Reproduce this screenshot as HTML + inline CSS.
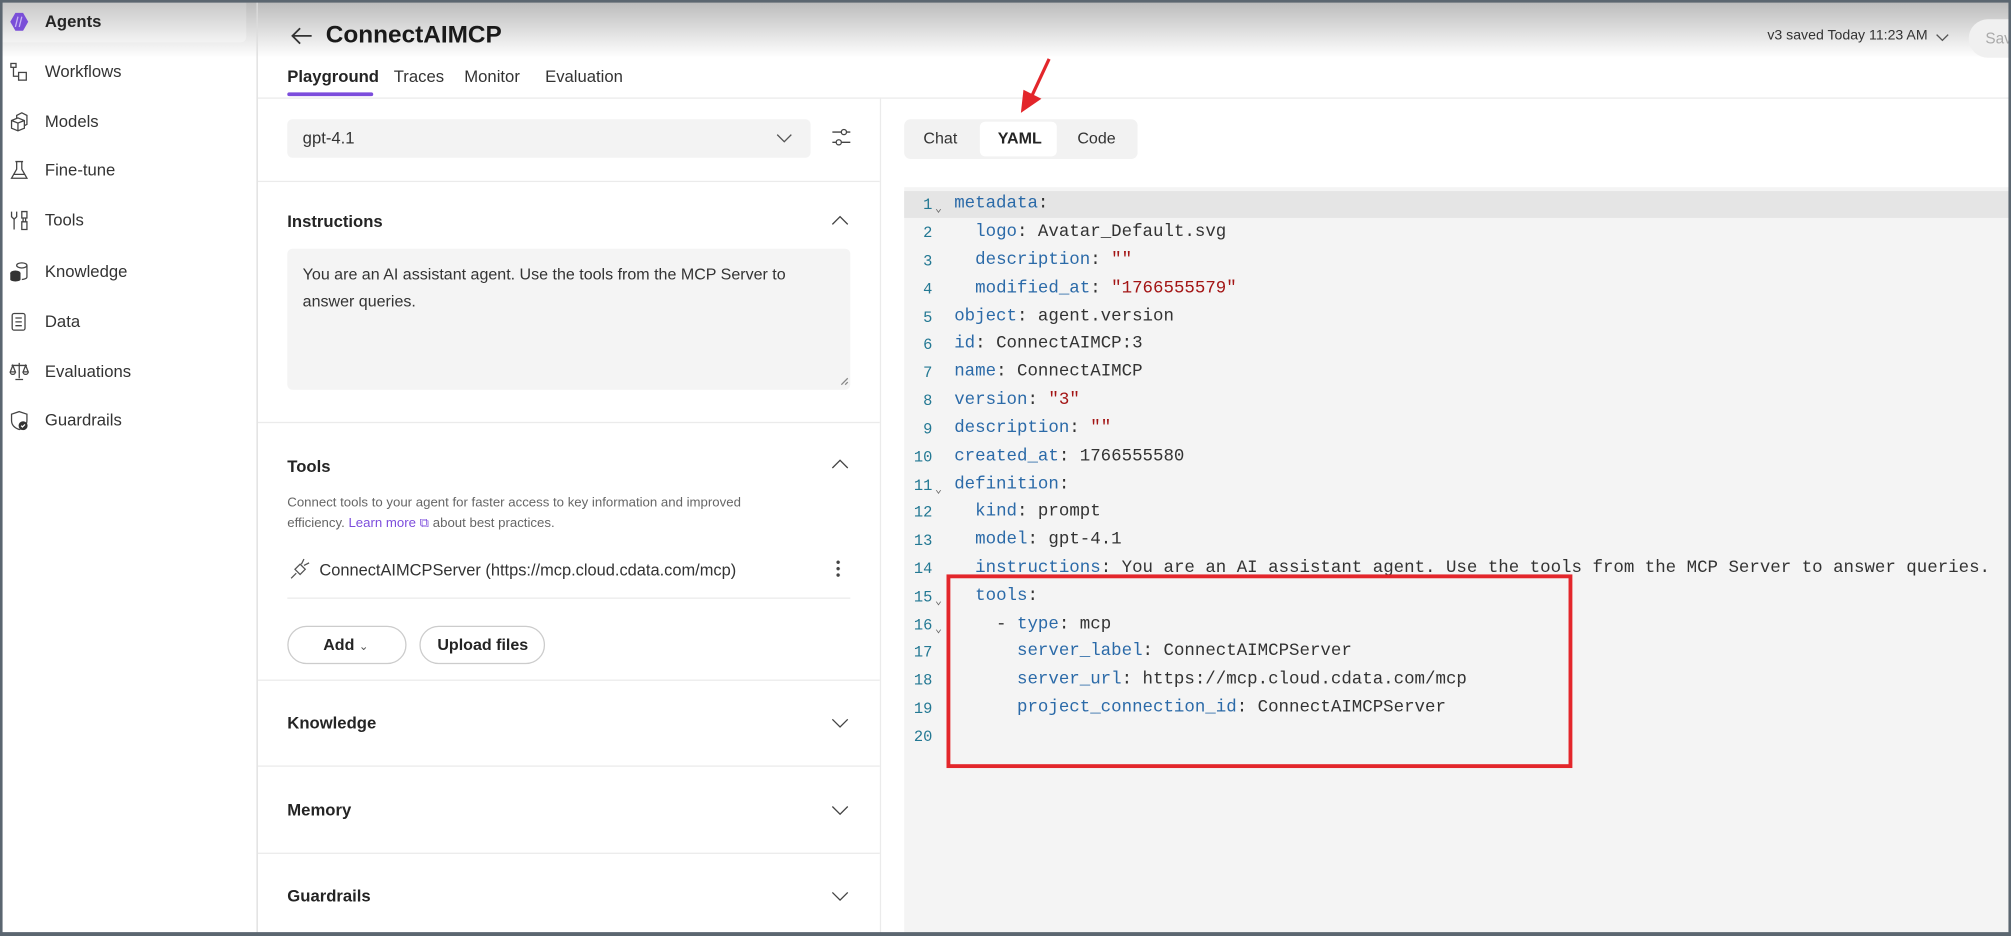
<!DOCTYPE html>
<html><head><meta charset="utf-8"><style>
*{box-sizing:border-box;margin:0;padding:0}
html,body{width:2011px;height:936px;overflow:hidden;background:#5b6670}
#s{position:absolute;left:0;top:0;width:1568px;height:730px;transform:scale(1.28253,1.2822);transform-origin:0 0;background:#fff;font-family:"Liberation Sans",sans-serif;color:#242424;overflow:hidden}
.a{position:absolute}
.frame{border-style:solid;border-color:#5b6670;border-width:2px 2px 3px 2px;position:absolute;left:0;top:0;width:1568px;height:730px;pointer-events:none}
.nav{position:absolute;left:35px;font-size:13px;color:#333}
.ic{position:absolute;left:7px;width:16px;height:16px}
.hr{position:absolute;height:1px;background:#ebebeb}
.sec{position:absolute;left:224px;font-size:13px;font-weight:bold;color:#242424}
.chev{position:absolute;left:648px;width:14px;height:10px}
.code{position:absolute;left:705px;top:146px;width:861px;height:584px;background:#f4f4f4;font-family:"Liberation Mono",monospace;font-size:13.6px}
.ln{position:absolute;left:0;width:861px;height:22px;line-height:22px;white-space:pre}
.n{position:absolute;left:0;width:22px;text-align:right;color:#237893;font-size:12px}
.t{position:absolute;left:39px;color:#333}
.k{color:#2b6aa8}.s{color:#a31515}
.f{position:absolute;left:24px;top:3px;font-size:9px;color:#666}
</style></head><body><div id="s">
<div class="a" style="left:0;top:0;width:1568px;height:45px;background:linear-gradient(#b9b9b9,#fff)"></div>
<div class="a" style="left:2px;top:2px;width:190px;height:31px;background:linear-gradient(#c8c8c8,#f3f3f3);border-radius:0 0 4px 0"></div>
<div class="a" style="left:200px;top:0;width:1px;height:730px;background:#dcdcdc"></div>
<svg class="ic" style="top:9px" viewBox="0 0 16 16"><path d="M5 1h6l4 7-4 7H5L1 8z" fill="#7a4fd8"/><path d="M7 4l-2 8M10 4l-2 8" stroke="#c9b5f5" stroke-width="1"/></svg>
<div class="nav" style="top:9px;font-weight:bold;color:#242424">Agents</div>
<svg class="ic" style="top:48px" viewBox="0 0 16 16" fill="none" stroke="#444"><rect x="1.5" y="1.5" width="4" height="3"/><rect x="7.5" y="8.5" width="6" height="6"/><path d="M3.5 4.5v7h4"/></svg>
<div class="nav" style="top:48px">Workflows</div>
<svg class="ic" style="top:87px" viewBox="0 0 16 16" fill="none" stroke="#444"><path d="M2 7l5-2 5 2v6l-5 2-5-2zM2 7l5 2 5-2M7 9v6M6 5V3l4-2 4 2v7l-2 1"/></svg>
<div class="nav" style="top:87px">Models</div>
<svg class="ic" style="top:125px" viewBox="0 0 16 16" fill="none" stroke="#444"><path d="M5 1h6M6 1v6l-4 7h12l-4-7V1M4 11h8"/></svg>
<div class="nav" style="top:125px">Fine-tune</div>
<svg class="ic" style="top:164px" viewBox="0 0 16 16" fill="none" stroke="#444"><path d="M2 1v4l2 2 2-2V1M4 7v8M10 1h4v5h-4zM11 6v3h2V6M10 9h4v6h-4z"/></svg>
<div class="nav" style="top:164px">Tools</div>
<svg class="ic" style="top:204px" viewBox="0 0 16 16"><ellipse cx="10" cy="3" rx="4" ry="2" fill="none" stroke="#444"/><path d="M14 3v9c0 1-2 2-4 2" fill="none" stroke="#444"/><ellipse cx="5" cy="9" rx="4" ry="2" fill="#333"/><rect x="1" y="9" width="8" height="5" fill="#333"/><ellipse cx="5" cy="14" rx="4" ry="1.5" fill="#333"/></svg>
<div class="nav" style="top:204px">Knowledge</div>
<svg class="ic" style="top:243px" viewBox="0 0 16 16" fill="none" stroke="#444"><rect x="2.5" y="1.5" width="10" height="13" rx="1.5"/><path d="M5 5h5M5 8h5M5 11h5"/></svg>
<div class="nav" style="top:243px">Data</div>
<svg class="ic" style="top:282px" viewBox="0 0 16 16" fill="none" stroke="#444"><path d="M8 1v12M2 3h12M3 3L1 8h4zM13 3l-2 5h4zM1 8a2 2 0 004 0M11 8a2 2 0 004 0M5 14h6"/></svg>
<div class="nav" style="top:282px">Evaluations</div>
<svg class="ic" style="top:320px" viewBox="0 0 16 16"><path d="M8 1l6 2v5c0 4-3 6-6 7-3-1-6-3-6-7V3z" fill="none" stroke="#444"/><circle cx="11" cy="12" r="3.5" fill="#333"/><path d="M9.5 12l1 1 2-2" stroke="#fff" fill="none"/></svg>
<div class="nav" style="top:320px">Guardrails</div>
<svg class="a" style="left:226px;top:20px" width="18" height="16" viewBox="0 0 18 16" fill="none" stroke="#333" stroke-width="1.4"><path d="M17 8H2M8 2L2 8l6 6"/></svg>
<div class="a" style="left:254px;top:17px;font-size:19px;font-weight:bold;color:#1a1a1a">ConnectAIMCP</div>
<div class="a" style="left:224px;top:52px;font-size:13px;font-weight:bold">Playground</div>
<div class="a" style="left:224px;top:72px;width:67px;height:3px;background:#7c4ddc;border-radius:2px"></div>
<div class="a" style="left:307px;top:52px;font-size:13px;color:#333">Traces</div>
<div class="a" style="left:362px;top:52px;font-size:13px;color:#333">Monitor</div>
<div class="a" style="left:425px;top:52px;font-size:13px;color:#333">Evaluation</div>
<div class="a" style="left:1378px;top:22px;font-size:11px;color:#333">v3 saved Today 11:23 AM</div>
<svg class="a" style="left:1509px;top:26px" width="11" height="7" viewBox="0 0 11 7" fill="none" stroke="#555"><path d="M1 1l4.5 4.5L10 1"/></svg>
<div class="a" style="left:1535px;top:15px;width:60px;height:30px;border-radius:15px;background:#f0f0f0;font-size:12px;color:#aaa;padding:8px 0 0 13px">Save</div>
<div class="hr" style="left:201px;top:76px;width:1365px"></div>
<div class="a" style="left:686px;top:76px;width:1px;height:654px;background:#ebebeb"></div>
<div class="a" style="left:224px;top:93px;width:408px;height:30px;background:#f3f3f3;border-radius:4px"></div>
<div class="a" style="left:236px;top:100px;font-size:13px;color:#333">gpt-4.1</div>
<svg class="a" style="left:605px;top:104px" width="13" height="8" viewBox="0 0 13 8" fill="none" stroke="#555"><path d="M1 1l5.5 5.5L12 1"/></svg>
<svg class="a" style="left:648px;top:98px" width="16" height="18" viewBox="0 0 16 18" fill="none" stroke="#444"><path d="M1 5h14M1 13h14"/><circle cx="10" cy="5" r="2" fill="#fff"/><circle cx="6" cy="13" r="2" fill="#fff"/></svg>
<div class="hr" style="left:201px;top:141px;width:485px"></div>
<div class="sec" style="top:165px">Instructions</div>
<svg class="chev" style="top:167px" viewBox="0 0 14 10" fill="none" stroke="#444"><path d="M1 8l6-6 6 6"/></svg>
<div class="a" style="left:224px;top:194px;width:439px;height:110px;background:#f4f4f4;border-radius:4px;padding:10px 12px;font-size:12.5px;line-height:21px;color:#333">You are an AI assistant agent. Use the tools from the MCP Server to answer queries.</div>
<svg class="a" style="left:655px;top:294px" width="7" height="7" viewBox="0 0 7 7" stroke="#888"><path d="M1 6l5-5M4 6l2-2"/></svg>
<div class="hr" style="left:201px;top:329px;width:485px"></div>
<div class="sec" style="top:356px">Tools</div>
<svg class="chev" style="top:357px" viewBox="0 0 14 10" fill="none" stroke="#444"><path d="M1 8l6-6 6 6"/></svg>
<div class="a" style="left:224px;top:385px;font-size:10.3px;line-height:16px;color:#666;width:395px">Connect tools to your agent for faster access to key information and improved efficiency. <span style="color:#7c4ddc">Learn more ⧉</span> about best practices.</div>
<svg class="a" style="left:226px;top:435px" width="16" height="17" viewBox="0 0 16 17" fill="none" stroke="#555"><path d="M1 16l4-4M11 1l-2 4M15 4l-4 2M4 9l4 4 4-4-4-4z"/></svg>
<div class="a" style="left:249px;top:437px;font-size:12.8px;color:#333">ConnectAIMCPServer (https://mcp.cloud.cdata.com/mcp)</div>
<div class="a" style="left:652px;top:436px;width:3px;height:15px;background:radial-gradient(circle,#444 1.2px,transparent 1.5px) 0 0/3px 5px"></div>
<div class="hr" style="left:224px;top:466px;width:439px"></div>
<div class="a" style="left:224px;top:488px;width:93px;height:30px;border:1px solid #ccc;border-radius:15px;font-size:12.5px;font-weight:bold;padding:7px 0 0 27px">Add <span style="font-weight:normal;font-size:9px;color:#555">⌄</span></div>
<div class="a" style="left:327px;top:488px;width:98px;height:30px;border:1px solid #ccc;border-radius:15px;font-size:12.5px;font-weight:bold;padding:7px 0 0 13px">Upload files</div>
<div class="hr" style="left:201px;top:530px;width:485px"></div>
<div class="sec" style="top:556px">Knowledge</div>
<svg class="chev" style="top:559px" viewBox="0 0 14 10" fill="none" stroke="#444"><path d="M1 2l6 6 6-6"/></svg>
<div class="hr" style="left:201px;top:597px;width:485px"></div>
<div class="sec" style="top:624px">Memory</div>
<svg class="chev" style="top:627px" viewBox="0 0 14 10" fill="none" stroke="#444"><path d="M1 2l6 6 6-6"/></svg>
<div class="hr" style="left:201px;top:665px;width:485px"></div>
<div class="sec" style="top:691px">Guardrails</div>
<svg class="chev" style="top:694px" viewBox="0 0 14 10" fill="none" stroke="#444"><path d="M1 2l6 6 6-6"/></svg>
<div class="a" style="left:705px;top:93px;width:182px;height:31px;background:#f2f2f2;border-radius:5px"></div>
<div class="a" style="left:764px;top:95px;width:60px;height:27px;background:#fff;border-radius:4px"></div>
<div class="a" style="left:720px;top:101px;font-size:12.5px;color:#333">Chat</div>
<div class="a" style="left:778px;top:101px;font-size:12.5px;font-weight:bold">YAML</div>
<div class="a" style="left:840px;top:101px;font-size:12.5px;color:#333">Code</div>
<div class="code">
<div class="a" style="left:0;top:3px;width:861px;height:21px;background:#e5e5e5"></div>
<div class="ln" style="top:3px"><span class="n">1</span><span class="f">⌄</span><span class="t"><span class="k">metadata</span>:</span></div>
<div class="ln" style="top:25px"><span class="n">2</span><span class="t">  <span class="k">logo</span>: Avatar_Default.svg</span></div>
<div class="ln" style="top:47px"><span class="n">3</span><span class="t">  <span class="k">description</span>: <span class="s">""</span></span></div>
<div class="ln" style="top:69px"><span class="n">4</span><span class="t">  <span class="k">modified_at</span>: <span class="s">"1766555579"</span></span></div>
<div class="ln" style="top:91px"><span class="n">5</span><span class="t"><span class="k">object</span>: agent.version</span></div>
<div class="ln" style="top:112px"><span class="n">6</span><span class="t"><span class="k">id</span>: ConnectAIMCP:3</span></div>
<div class="ln" style="top:134px"><span class="n">7</span><span class="t"><span class="k">name</span>: ConnectAIMCP</span></div>
<div class="ln" style="top:156px"><span class="n">8</span><span class="t"><span class="k">version</span>: <span class="s">"3"</span></span></div>
<div class="ln" style="top:178px"><span class="n">9</span><span class="t"><span class="k">description</span>: <span class="s">""</span></span></div>
<div class="ln" style="top:200px"><span class="n">10</span><span class="t"><span class="k">created_at</span>: 1766555580</span></div>
<div class="ln" style="top:222px"><span class="n">11</span><span class="f">⌄</span><span class="t"><span class="k">definition</span>:</span></div>
<div class="ln" style="top:243px"><span class="n">12</span><span class="t">  <span class="k">kind</span>: prompt</span></div>
<div class="ln" style="top:265px"><span class="n">13</span><span class="t">  <span class="k">model</span>: gpt-4.1</span></div>
<div class="ln" style="top:287px"><span class="n">14</span><span class="t">  <span class="k">instructions</span>: You are an AI assistant agent. Use the tools from the MCP Server to answer queries.</span></div>
<div class="ln" style="top:309px"><span class="n">15</span><span class="f">⌄</span><span class="t">  <span class="k">tools</span>:</span></div>
<div class="ln" style="top:331px"><span class="n">16</span><span class="f">⌄</span><span class="t">    - <span class="k">type</span>: mcp</span></div>
<div class="ln" style="top:352px"><span class="n">17</span><span class="t">      <span class="k">server_label</span>: ConnectAIMCPServer</span></div>
<div class="ln" style="top:374px"><span class="n">18</span><span class="t">      <span class="k">server_url</span>: https://mcp.cloud.cdata.com/mcp</span></div>
<div class="ln" style="top:396px"><span class="n">19</span><span class="t">      <span class="k">project_connection_id</span>: ConnectAIMCPServer</span></div>
<div class="ln" style="top:418px"><span class="n">20</span></div>
</div>
<div class="a" style="left:738px;top:448px;width:488px;height:151px;border:3px solid #e3262b"></div>
<svg class="a" style="left:790px;top:44px" width="32" height="48" viewBox="0 0 32 48"><path d="M28 2L14 32" stroke="#e3262b" stroke-width="2.5"/><path d="M6 44l2-18 14 7z" fill="#e3262b"/></svg>
<div class="frame"></div>
</div></body></html>
